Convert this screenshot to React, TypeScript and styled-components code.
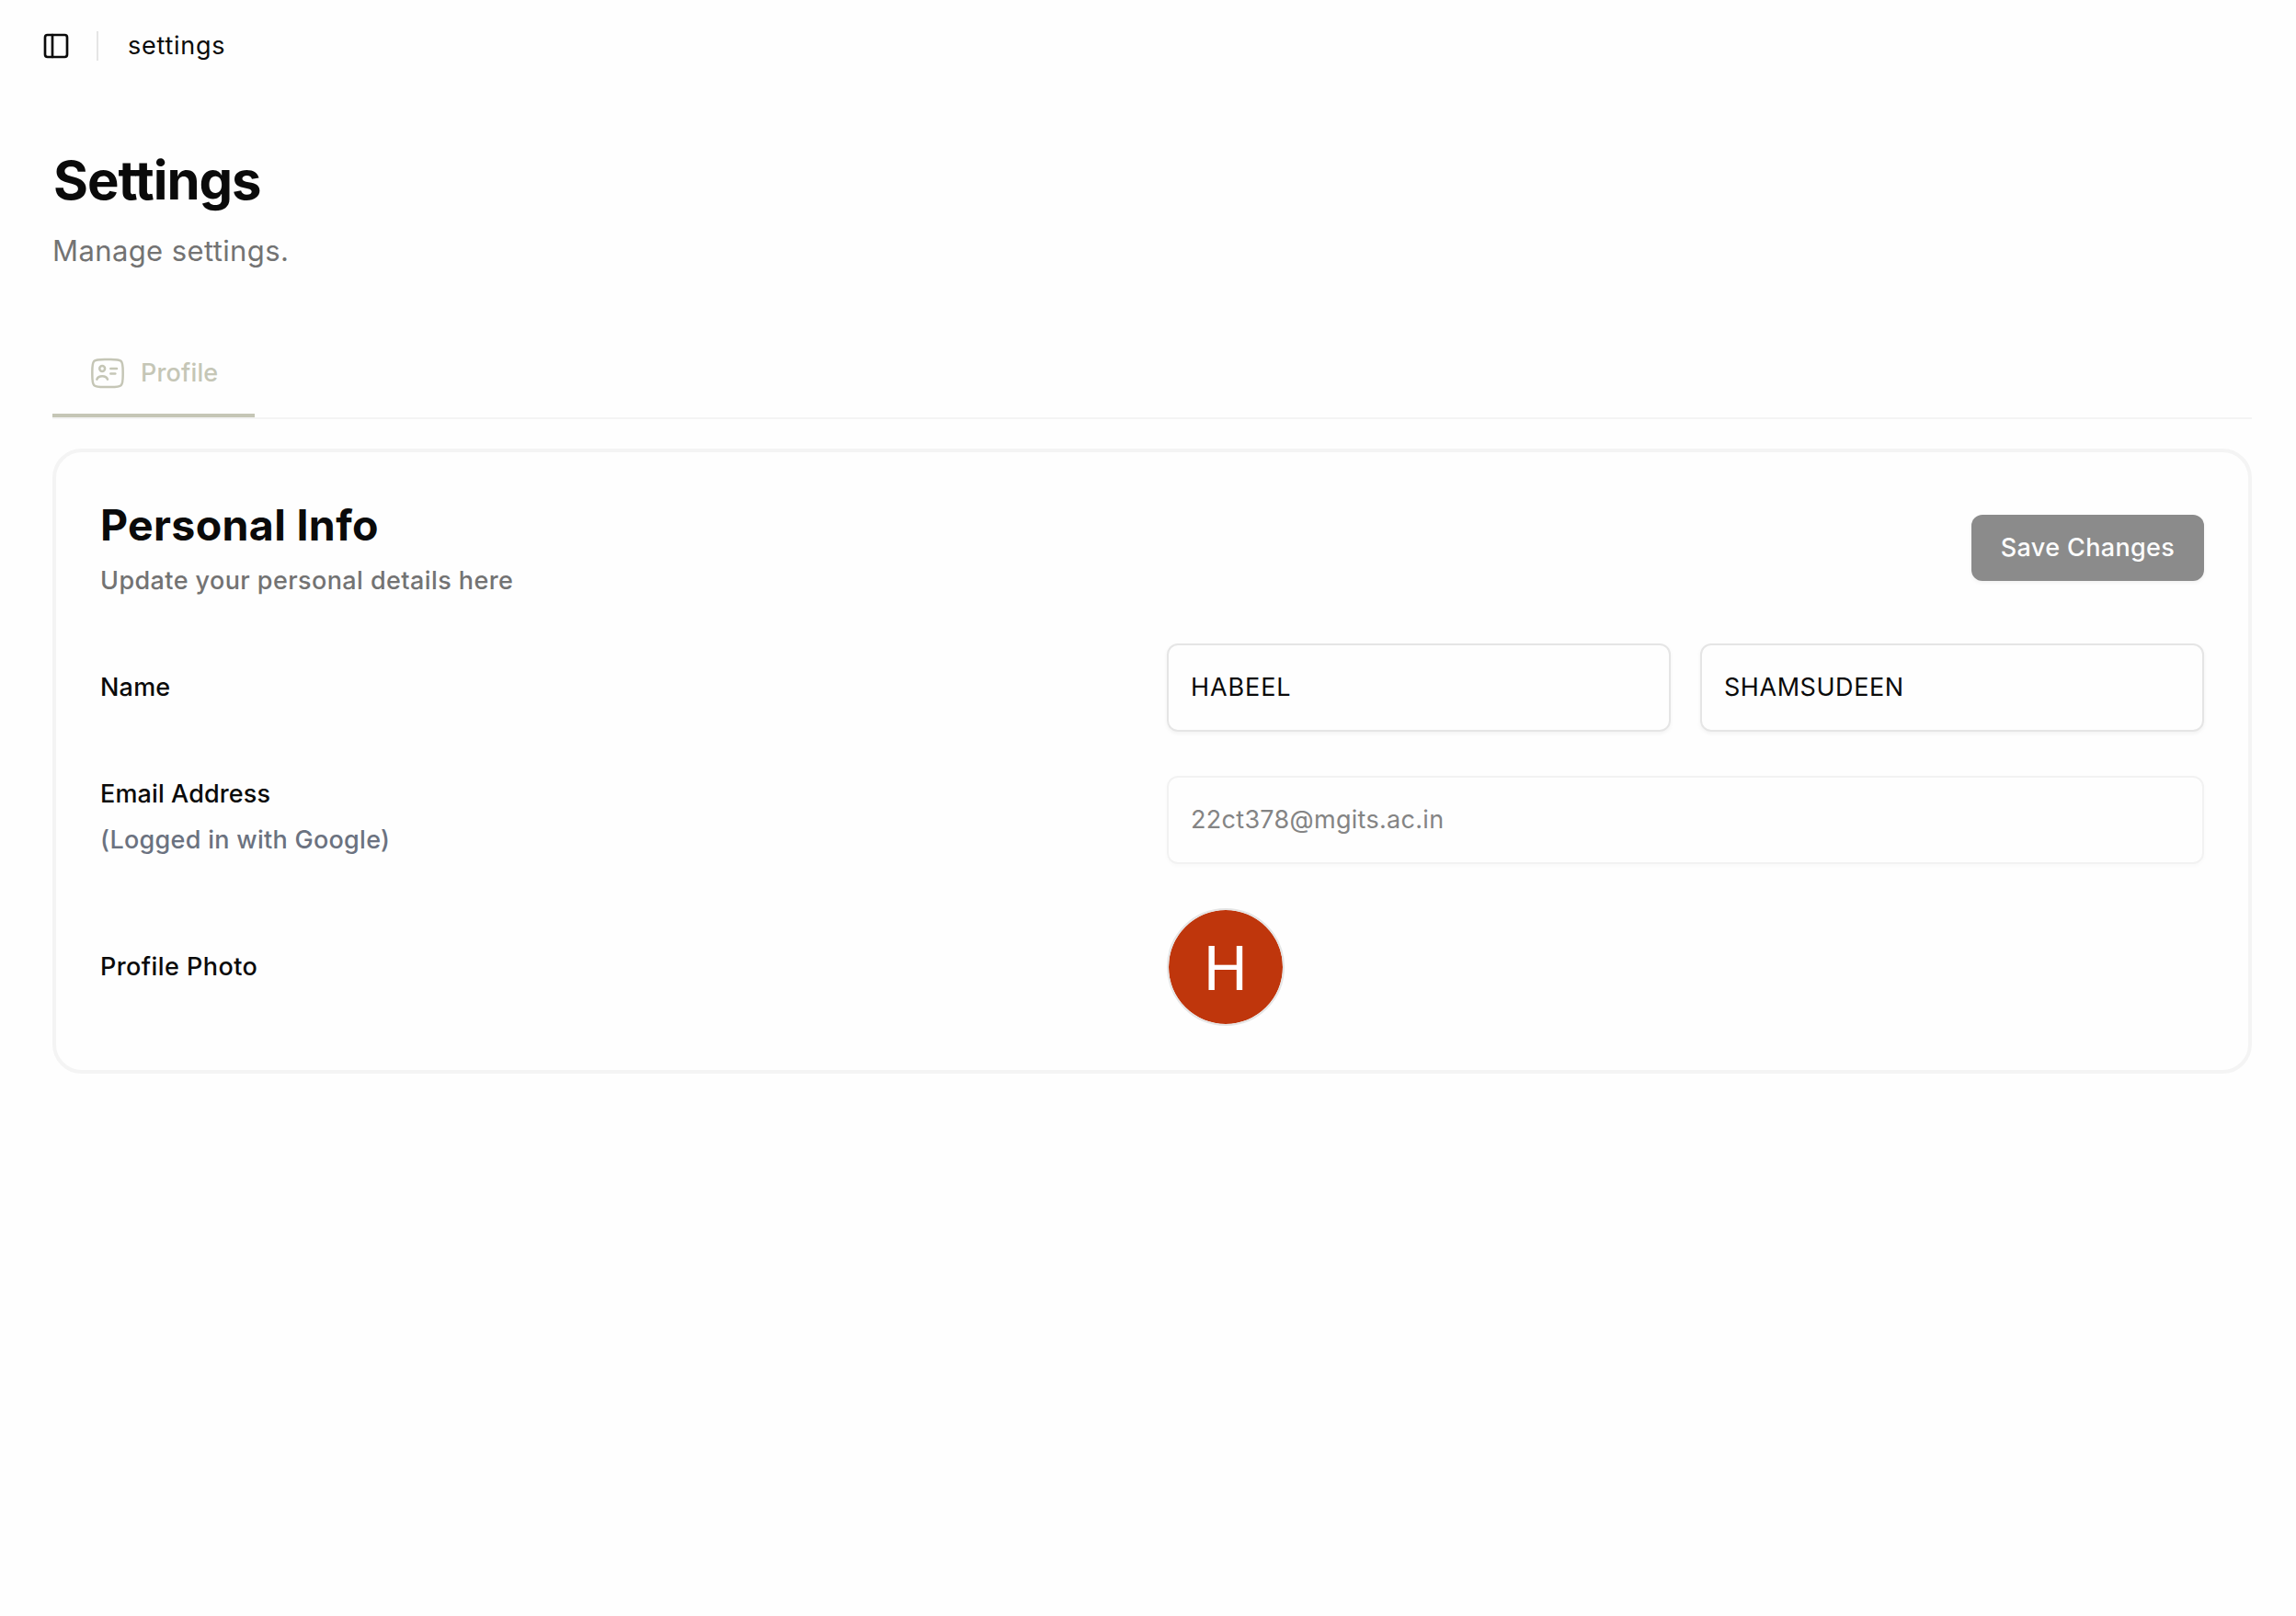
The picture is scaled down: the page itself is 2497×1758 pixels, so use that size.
import React from "react";
import styled, { createGlobalStyle } from "styled-components";
import { PanelLeft } from "lucide-react";

const GlobalStyle = createGlobalStyle`
  *, *::before, *::after { box-sizing: border-box; }
  html, body { margin: 0; padding: 0; background: #fefefe; }
  body {
    font-family: Inter, "Liberation Sans", sans-serif;
    font-size: 27px;
    color: #0a0a0a;
  }
`;

const Page = styled.div`
  min-height: 1758px;
  background: #fefefe;
`;

const TopBar = styled.header`
  display: flex;
  align-items: center;
  height: 100px;
  padding-left: 45px;
`;

const SidebarToggle = styled.button`
  display: flex;
  padding: 0;
  border: 0;
  background: none;
  color: #0a0a0a;
`;

const Divider = styled.span`
  width: 2px;
  height: 32px;
  margin: 0 32px 0 28px;
  background: #e5e5e5;
`;

const Crumb = styled.span`
  line-height: 40px;
  letter-spacing: 0.75px;
  padding-bottom: 1px;
`;

const Main = styled.main`
  padding: 60px 48px 0 57px;
`;

const PageTitle = styled.h1`
  margin: 0;
  font-size: 58px;
  font-weight: 700;
  line-height: 72px;
  letter-spacing: -1.06px;
  text-indent: 1px;
`;

const PageLead = styled.p`
  margin: 17px 0 63px;
  font-size: 31px;
  line-height: 48px;
  letter-spacing: 0.39px;
  color: #737373;
`;

const TabList = styled.nav`
  display: flex;
  height: 96px;
  border-bottom: 2px solid #f4f4f4;
`;

const Tab = styled.button`
  display: flex;
  align-items: center;
  gap: 16px;
  width: 220px;
  padding: 0 0 0 40px;
  border: 0;
  border-bottom: 4px solid #c5c6b6;
  background: none;
  color: #c5c6b6;
  font: inherit;
  font-weight: 500;
  letter-spacing: 0.14px;
`;

const TabGlyph = styled.svg`
  margin-top: 2px;
`;

const Card = styled.section`
  display: flex;
  flex-direction: column;
  gap: 48px;
  margin-top: 32px;
  padding: 48px;
  border: 4px solid #f4f4f4;
  border-radius: 32px;
`;

const CardHeader = styled.div`
  display: flex;
  align-items: center;
  justify-content: space-between;
  height: 112px;
`;

const CardTitle = styled.h2`
  margin: 0;
  font-size: 46.5px;
  font-weight: 700;
  line-height: 62px;
  letter-spacing: 0.33px;
`;

const CardHint = styled.p`
  margin: 10px 0 0;
  font-weight: 500;
  line-height: 40px;
  letter-spacing: 0.41px;
  color: #737373;
`;

const SaveButton = styled.button`
  width: 253px;
  height: 72px;
  padding: 0 0 2px;
  border: 0;
  border-radius: 12px;
  background: #8b8b8b;
  box-shadow: 0 2px 4px rgba(0, 0, 0, 0.05);
  color: #fcfcfc;
  font: inherit;
  font-weight: 500;
  letter-spacing: 0.35px;
`;

const Row = styled.div`
  display: grid;
  grid-template-columns: 1fr 1fr;
  column-gap: 32px;
  align-items: center;
`;

const Labels = styled.div<{ $lift?: number }>`
  display: flex;
  flex-direction: column;
  gap: 10px;
  padding-bottom: ${(p) => p.$lift ?? 0}px;
`;

const Label = styled.label<{ $spacing: number; $muted?: boolean }>`
  font-weight: 500;
  line-height: 40px;
  letter-spacing: ${(p) => p.$spacing}px;
  color: ${(p) => (p.$muted ? "#6b7280" : "#0a0a0a")};
`;

const Fields = styled.div`
  display: flex;
  gap: 32px;
`;

const Input = styled.input<{ $spacing: number }>`
  flex: 1;
  min-width: 0;
  height: 96px;
  padding: 0 24px 1px;
  border: 2px solid #e5e5e5;
  border-radius: 12px;
  background: transparent;
  box-shadow: 0 2px 4px rgba(0, 0, 0, 0.05);
  color: #0a0a0a;
  font: inherit;
  letter-spacing: ${(p) => p.$spacing}px;
  outline: none;

  &:disabled {
    border-color: #f2f2f2;
    box-shadow: 0 2px 4px rgba(0, 0, 0, 0.025);
    color: #848484;
  }
`;

const Avatar = styled.div`
  display: flex;
  align-items: center;
  justify-content: center;
  width: 128px;
  height: 128px;
  border: 2px solid #e5e5e5;
  border-radius: 50%;
  background: #bf360c;
  background-clip: padding-box;
  color: #fff;
  font-family: Roboto, sans-serif;
  font-size: 67px;
  line-height: 120px;
  padding-top: 4px;
`;

const ContactIcon = () => (
  <TabGlyph width="40" height="40" viewBox="0 0 24 24" fill="none" stroke="currentColor" strokeWidth="1.5" strokeLinecap="round">
    <path d="M14 3H10C6.23 3 4.34 3 3.17 4.17C2 5.34 2 7.23 2 11V13C2 16.77 2 18.66 3.17 19.83C4.34 21 6.23 21 10 21H14C17.77 21 19.66 21 20.83 19.83C22 18.66 22 16.77 22 13V11C22 7.23 22 5.34 20.83 4.17C19.66 3 17.77 3 14 3Z" />
    <path d="M5 16C6.04 13.42 10.9 13.25 12 16" />
    <circle cx="8.5" cy="9" r="1.75" />
    <path d="M14 9H18" />
    <path d="M14 12.25H17" />
  </TabGlyph>
);

export default function App() {
  return (
    <Page>
      <GlobalStyle />
      <TopBar>
        <SidebarToggle aria-label="Toggle sidebar">
          <PanelLeft size={32} />
        </SidebarToggle>
        <Divider />
        <Crumb>settings</Crumb>
      </TopBar>
      <Main>
        <PageTitle>Settings</PageTitle>
        <PageLead>Manage settings.</PageLead>
        <TabList>
          <Tab>
            <ContactIcon />
            Profile
          </Tab>
        </TabList>
        <Card>
          <CardHeader>
            <div>
              <CardTitle>Personal Info</CardTitle>
              <CardHint>Update your personal details here</CardHint>
            </div>
            <SaveButton>Save Changes</SaveButton>
          </CardHeader>
          <Row>
            <Labels>
              <Label $spacing={0.19}>Name</Label>
            </Labels>
            <Fields>
              <Input $spacing={0.9} defaultValue="HABEEL" />
              <Input $spacing={0.55} defaultValue="SHAMSUDEEN" />
            </Fields>
          </Row>
          <Row>
            <Labels $lift={6}>
              <Label $spacing={0.12}>Email Address</Label>
              <Label $spacing={0.28} $muted>
                (Logged in with Google)
              </Label>
            </Labels>
            <Fields>
              <Input $spacing={0.3} defaultValue="22ct378@mgits.ac.in" disabled />
            </Fields>
          </Row>
          <Row>
            <Labels>
              <Label $spacing={0.43}>Profile Photo</Label>
            </Labels>
            <Avatar>H</Avatar>
          </Row>
        </Card>
      </Main>
    </Page>
  );
}
